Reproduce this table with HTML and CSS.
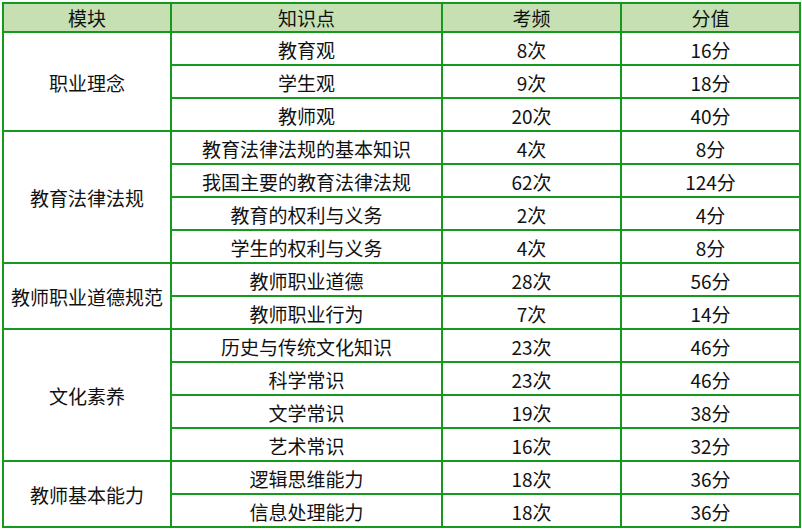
FILE: index.html
```html
<!DOCTYPE html>
<html lang="zh">
<head>
<meta charset="utf-8">
<link rel="stylesheet" href="styles.css">
</head>
<body>
<table class="exam">
  <colgroup>
    <col class="c1"><col class="c2"><col class="c3"><col class="c4">
  </colgroup>
  <thead>
    <tr class="head"><th>模块</th><th>知识点</th><th>考频</th><th>分值</th></tr>
  </thead>
  <tbody>
    <tr><td rowspan="3">职业理念</td><td>教育观</td><td>8次</td><td>16分</td></tr>
    <tr><td>学生观</td><td>9次</td><td>18分</td></tr>
    <tr><td>教师观</td><td>20次</td><td>40分</td></tr>
    <tr><td rowspan="4">教育法律法规</td><td>教育法律法规的基本知识</td><td>4次</td><td>8分</td></tr>
    <tr><td>我国主要的教育法律法规</td><td>62次</td><td>124分</td></tr>
    <tr><td>教育的权利与义务</td><td>2次</td><td>4分</td></tr>
    <tr><td>学生的权利与义务</td><td>4次</td><td>8分</td></tr>
    <tr><td rowspan="2">教师职业道德规范</td><td>教师职业道德</td><td>28次</td><td>56分</td></tr>
    <tr><td>教师职业行为</td><td>7次</td><td>14分</td></tr>
    <tr><td rowspan="4">文化素养</td><td>历史与传统文化知识</td><td>23次</td><td>46分</td></tr>
    <tr><td>科学常识</td><td>23次</td><td>46分</td></tr>
    <tr><td>文学常识</td><td>19次</td><td>38分</td></tr>
    <tr><td>艺术常识</td><td>16次</td><td>32分</td></tr>
    <tr><td rowspan="2">教师基本能力</td><td>逻辑思维能力</td><td>18次</td><td>36分</td></tr>
    <tr><td>信息处理能力</td><td>18次</td><td>36分</td></tr>
  </tbody>
</table>
</body>
</html>
```

FILE: styles.css
```css
html, body {
  margin: 0;
  padding: 0;
  background: #ffffff;
}
body {
  padding: 2px 0 0 2px;
  font-family: "Noto Sans CJK SC", "Noto Sans", sans-serif;
  color: #111111;
}
.exam {
  border-collapse: separate;
  border-spacing: 0;
  border-left: 2px solid #149a1c;
  border-top: 2px solid #149a1c;
  table-layout: fixed;
}
.c1 { width: 168px; }
.c2 { width: 271px; }
.c3 { width: 179px; }
.c4 { width: 179px; }
.exam th,
.exam td {
  border-right: 2px solid #149a1c;
  border-bottom: 2px solid #149a1c;
  padding: 0;
  text-align: center;
  vertical-align: middle;
  font-size: 19px;
  font-weight: normal;
  line-height: 24px;
  white-space: nowrap;
  box-sizing: border-box;
}
.exam th {
  background: #c6e0b4;
  height: 29px;
  padding-top: 1px;
}
.exam tbody td {
  height: 33px;
  padding-top: 2px;
}
.exam tbody td[rowspan] {
  height: auto;
}
.head { height: 29px; }
.exam tbody tr { height: 33px; }
```
